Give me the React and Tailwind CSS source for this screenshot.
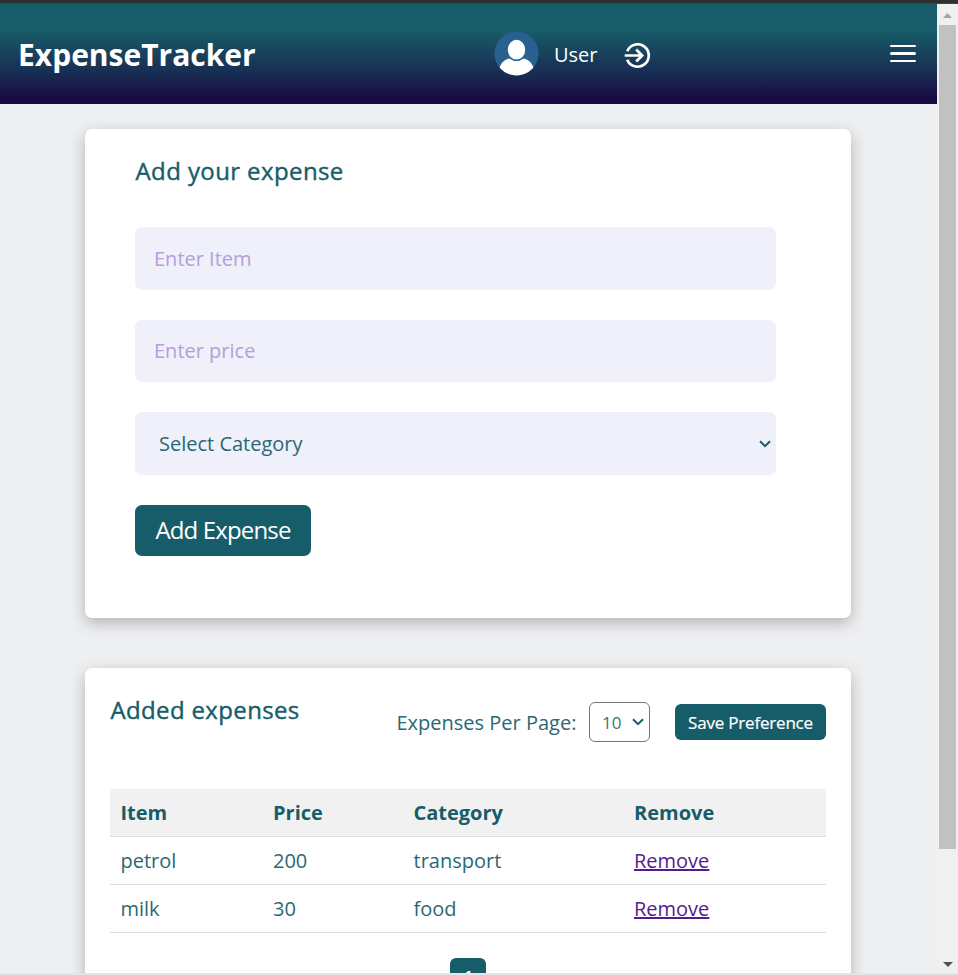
const rows = [
  { item: "petrol", price: "200", category: "transport" },
  { item: "milk", price: "30", category: "food" },
];

function Chevron({ className }) {
  return (
    <svg className={className} width="12" height="8" viewBox="0 0 12 8" fill="none" stroke="#175d69" strokeWidth="2">
      <path d="M1 1.2 6 6.2 11 1.2" />
    </svg>
  );
}

function Header() {
  return (
    <header className="flex h-[100px] shrink-0 items-center bg-[linear-gradient(to_bottom,#175d69_25%,#182b52_71%,#190a42_95%)] text-white">
      <h1 className="w-[494px] pt-[2px] pl-[18px] text-[30px] leading-[40px] font-bold">ExpenseTracker</h1>
      <svg className="mb-px" width="45" height="45" viewBox="0 0 45 45">
        <defs>
          <clipPath id="avatar">
            <circle cx="22.5" cy="22.5" r="22" />
          </clipPath>
        </defs>
        <g clipPath="url(#avatar)">
          <rect width="45" height="45" fill="#286090" />
          <path d="M5 38C7 31 12 27.500 16 27.500Q22.500 32 29 27.500C33 27.500 38 31 40 38V45H5Z" fill="#fff" />
          <ellipse cx="22.500" cy="18.500" rx="10" ry="11.500" fill="#286090" />
          <ellipse cx="22.500" cy="18.700" rx="8.700" ry="9.900" fill="#fff" />
        </g>
      </svg>
      <span className="ml-[15px] w-[70px] pt-[2px] text-[20px] leading-[28px]">User</span>
      <svg className="mt-[3px]" width="27" height="26" viewBox="0 0 27 26" fill="none" stroke="#fff" strokeWidth="2.7">
        <path d="M3.200 8.300A11.200 11.200 0 1 1 3.200 16.700" />
        <path d="M.7 12.500H17.500M12.200 6.500 18.200 12.500 12.200 18.500" />
      </svg>
      <div className="mr-[21px] mb-px ml-auto flex w-[26px] flex-col gap-[5px]">
        <span className="h-[2.500px] rounded-full bg-white" />
        <span className="h-[2.500px] rounded-full bg-white" />
        <span className="h-[2.500px] rounded-full bg-white" />
      </div>
    </header>
  );
}

function AddExpense() {
  return (
    <section className="mt-[25px] ml-[85px] h-[489px] w-[766px] shrink-0 rounded-[7px] bg-white px-[50px] pt-[25px] shadow-[0_5px_15px_rgba(0,0,0,0.25)]">
      <h2 className="pl-[0.500px] text-[24px] leading-[33px] font-medium tracking-[0.400px] [-webkit-text-stroke:0.400px_#175d69]">Add your expense</h2>
      <div className="mt-[40px] flex w-[641px] flex-col gap-[30px]">
        <div className="flex h-[63px] items-center rounded-[7px] bg-[#eff0f9] pl-[19px] text-[#b49fda]">Enter Item</div>
        <div className="flex h-[62px] items-center rounded-[7px] bg-[#eff0f9] pl-[19px] text-[#b49fda]">Enter price</div>
        <div className="flex h-[63px] items-center justify-between rounded-[7px] bg-[#eff0f9] pr-[5px] pl-[24px]">
          <span className="text-[#2a6873]">Select Category</span>
          <Chevron />
        </div>
        <button className="h-[51px] w-[176px] rounded-[7px] bg-[#175d69] pb-[2px] text-[24px] leading-[33px] tracking-[-0.850px] text-white">Add Expense</button>
      </div>
    </section>
  );
}

function ExpenseList() {
  const columns = "grid grid-cols-[152.500px_140.500px_220.500px_1fr] items-center border-b border-[#dddddd] pl-[10.500px]";
  return (
    <section className="mt-[50px] ml-[85px] h-[400px] w-[766px] shrink-0 rounded-[7px] bg-white px-[25px] pt-[25px] shadow-[0_5px_15px_rgba(0,0,0,0.25)]">
      <div className="flex h-[96px] items-start">
        <h2 className="w-[286.500px] pl-[0.500px] text-[24px] leading-[33px] font-medium tracking-[0.350px] [-webkit-text-stroke:0.400px_#175d69]">Added expenses</h2>
        <span className="mt-[16px] w-[192.500px] leading-[28px] text-[#2a6873]">Expenses Per Page:</span>
        <div className="mt-[9px] flex h-[40px] w-[61px] items-center justify-between rounded-[6px] border border-[#767676] pr-[5px] pl-[12px] text-[17px]">
          <span className="pt-[2px] text-[#45717a]">10</span>
          <Chevron />
        </div>
        <button className="mt-[11px] ml-[25px] h-[36px] w-[151px] rounded-[6px] bg-[#175d69] pt-[2px] text-[17px] tracking-[-0.200px] text-white [-webkit-text-stroke:0.200px_#fff]">Save Preference</button>
      </div>
      <div className={`${columns} h-[48px] bg-[#f1f1f1] font-bold`}>
        <span>Item</span>
        <span>Price</span>
        <span>Category</span>
        <span>Remove</span>
      </div>
      {rows.map((row) => (
        <div key={row.item} className={`${columns} h-[48px] text-[#2a6873]`}>
          <span>{row.item}</span>
          <span>{row.price}</span>
          <span>{row.category}</span>
          <a className="text-[#551a8b] underline">Remove</a>
        </div>
      ))}
      <div className="mt-[25px] ml-[340px] h-[40px] w-[36px] rounded-[6px] bg-[#175d69] pt-[8px] text-center text-[17px] leading-[23px] font-bold text-white">1</div>
    </section>
  );
}

function Scrollbar() {
  return (
    <aside className="flex w-[21px] flex-col items-center bg-[#f0f0f0]">
      <svg className="mt-[9px]" width="9" height="5" viewBox="0 0 9 5"><path d="M4.500 0 9 5H0Z" fill="#a3a3a3" /></svg>
      <div className="mt-[7px] h-[824px] w-[17px] bg-[#c1c1c1]" />
      <svg className="mt-auto mb-[6px]" width="10" height="5" viewBox="0 0 10 5"><path d="M0 0H10L5 5Z" fill="#505050" /></svg>
    </aside>
  );
}

export default function App() {
  return (
    <div className="flex h-[975px] w-[958px] flex-col overflow-hidden bg-[#eeeff1] font-['Open_Sans',sans-serif] text-[20px] leading-[28px] text-[#175d69]">
      <div className="h-1 shrink-0 border-b border-[#3c4444] bg-[#303030]" />
      <div className="flex min-h-0 flex-1">
        <main className="flex w-[937px] flex-col overflow-hidden">
          <Header />
          <AddExpense />
          <ExpenseList />
        </main>
        <Scrollbar />
      </div>
      <div className="h-[2px] shrink-0 bg-[#e3e6e8]" />
    </div>
  );
}
